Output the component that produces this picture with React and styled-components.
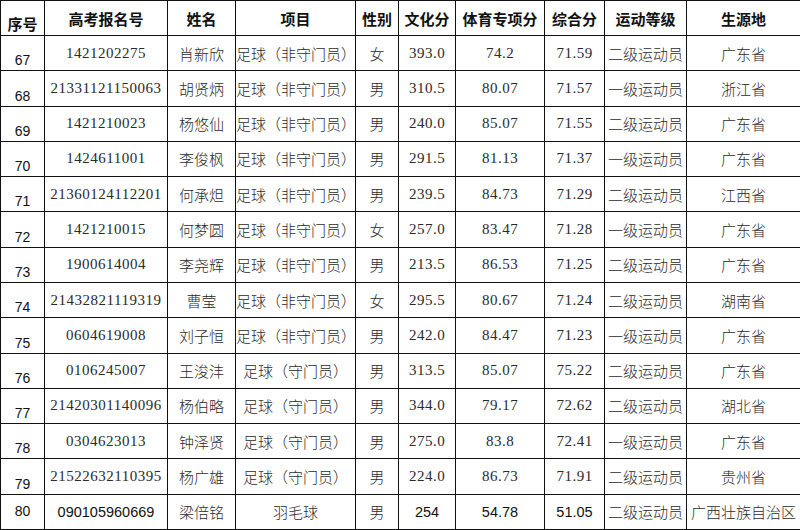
import React from "react";
import styled, { createGlobalStyle } from "styled-components";

const widths = [44, 123, 68, 120, 43, 57, 89, 60, 82, 114];

const headers = ["序号", "高考报名号", "姓名", "项目", "性别", "文化分", "体育专项分", "综合分", "运动等级", "生源地"];

const rows = [
    ["67", "1421202275", "肖新欣", "足球（非守门员）", "女", "393.0", "74.2", "71.59", "二级运动员", "广东省"],
    ["68", "21331121150063", "胡贤炳", "足球（非守门员）", "男", "310.5", "80.07", "71.57", "一级运动员", "浙江省"],
    ["69", "1421210023", "杨悠仙", "足球（非守门员）", "男", "240.0", "85.07", "71.55", "二级运动员", "广东省"],
    ["70", "1424611001", "李俊枫", "足球（非守门员）", "男", "291.5", "81.13", "71.37", "一级运动员", "广东省"],
    ["71", "21360124112201", "何承炟", "足球（非守门员）", "男", "239.5", "84.73", "71.29", "二级运动员", "江西省"],
    ["72", "1421210015", "何梦圆", "足球（非守门员）", "女", "257.0", "83.47", "71.28", "一级运动员", "广东省"],
    ["73", "1900614004", "李尧辉", "足球（非守门员）", "男", "213.5", "86.53", "71.25", "二级运动员", "广东省"],
    ["74", "21432821119319", "曹莹", "足球（非守门员）", "女", "295.5", "80.67", "71.24", "二级运动员", "湖南省"],
    ["75", "0604619008", "刘子恒", "足球（非守门员）", "男", "242.0", "84.47", "71.23", "一级运动员", "广东省"],
    ["76", "0106245007", "王浚沣", "足球（守门员）", "男", "313.5", "85.07", "75.22", "二级运动员", "广东省"],
    ["77", "21420301140096", "杨伯略", "足球（守门员）", "男", "344.0", "79.17", "72.62", "二级运动员", "湖北省"],
    ["78", "0304623013", "钟泽贤", "足球（守门员）", "男", "275.0", "83.8", "72.41", "一级运动员", "广东省"],
    ["79", "21522632110395", "杨广雄", "足球（守门员）", "男", "224.0", "86.73", "71.91", "二级运动员", "贵州省"],
];

const lastRow = ["80", "090105960669", "梁倍铭", "羽毛球", "男", "254", "54.78", "51.05", "二级运动员", "广西壮族自治区"];

// columns of the last row that are in the sans face
const lastSans = [0, 1, 5, 6, 7];

const GlobalStyle = createGlobalStyle`
    html, body {
        margin: 0;
        padding: 0;
        background: #fff;
    }
`;

const Table = styled.table`
    width: 800px;
    height: 530px;
    table-layout: fixed;
    border-collapse: collapse;
    font-family: "Liberation Serif", "Noto Sans CJK SC", serif;
    color: #2a2a2a;
`;

const Row = styled.tr`
    height: 35px;
`;

const HeadCell = styled.th`
    border: 1px solid #111;
    padding: 0;
    font-family: "Liberation Sans", "Noto Sans CJK SC", sans-serif;
    font-size: 15px;
    font-weight: 700;
    color: #111;
    text-align: center;
    vertical-align: ${(p) => (p.$bottom ? "bottom" : "middle")};
    padding-bottom: ${(p) => (p.$bottom ? "1px" : "0")};
    white-space: nowrap;
`;

const Cell = styled.td`
    border: 1px solid #111;
    padding: 0;
    font-size: 15px;
    font-weight: 300;
    text-align: center;
    white-space: nowrap;
    overflow: hidden;
    letter-spacing: ${(p) => (p.$num ? "0.5px" : "0")};
`;

const IndexCell = styled.td`
    border: 1px solid #111;
    padding: 0 0 2px;
    font-family: "Liberation Sans", sans-serif;
    font-size: 14px;
    color: #111;
    text-align: center;
    vertical-align: ${(p) => (p.$middle ? "middle" : "bottom")};
`;

const SansCell = styled(Cell)`
    font-family: "Liberation Sans", "Noto Sans CJK SC", sans-serif;
    font-weight: 400;
    font-size: 14.5px;
    letter-spacing: 0;
    color: #111;
`;

const isNum = (s) => /^[0-9.]+$/.test(s);

const App = () => {
    return <>
        <GlobalStyle />
        <Table>
            <colgroup>
                {widths.map((w, i) => <col key={i} style={{ width: w }} />)}
            </colgroup>
            <thead>
                <Row>
                    {headers.map((h, i) => <HeadCell key={h} $bottom={i === 0}>{h}</HeadCell>)}
                </Row>
            </thead>
            <tbody>
                {rows.map((r) => <Row key={r[0]}>
                    <IndexCell>{r[0]}</IndexCell>
                    {r.slice(1).map((c, i) => <Cell key={i} $num={isNum(c)}>{c}</Cell>)}
                </Row>)}
                <Row>
                    <IndexCell $middle>{lastRow[0]}</IndexCell>
                    {lastRow.slice(1).map((c, i) => lastSans.includes(i + 1)
                        ? <SansCell key={i}>{c}</SansCell>
                        : <Cell key={i}>{c}</Cell>)}
                </Row>
            </tbody>
        </Table>
    </>;
};

export default App;
